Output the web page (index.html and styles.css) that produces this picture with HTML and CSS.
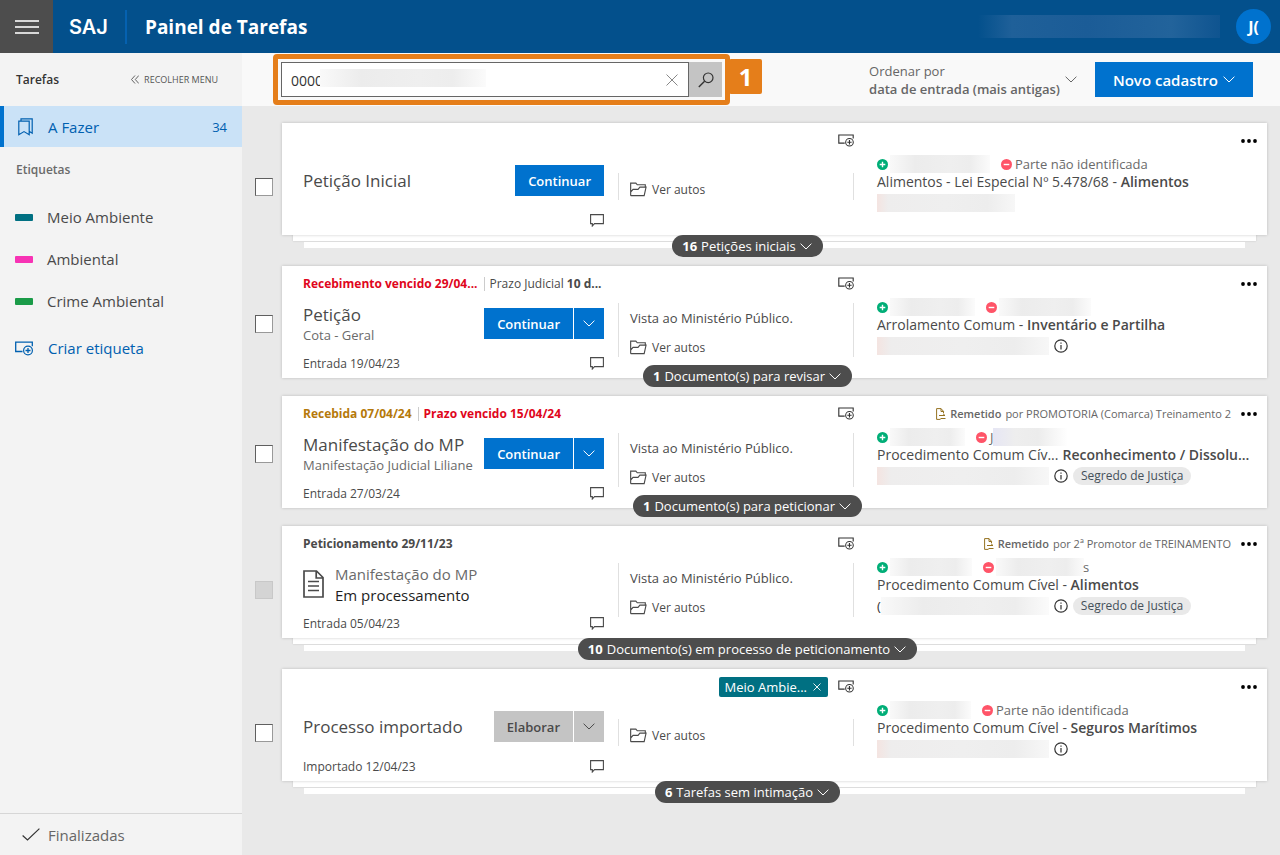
FILE: index.html
```html
<!DOCTYPE html>
<html lang="pt-BR">
<head>
<meta charset="utf-8">
<meta name="viewport" content="width=device-width, initial-scale=1">
<title>Painel de Tarefas</title>
<link rel="stylesheet" href="styles.css">
</head>
<body>
<svg class="sprite" aria-hidden="true">
  <symbol id="i-tag-add" viewBox="0 0 18 15"><path d="M7.500 10.500H.7V1.200h16.600v4" fill="none" stroke="currentColor" stroke-width="1.300"/><circle cx="13" cy="9.500" r="4.400" fill="none" stroke="currentColor" stroke-width="1.200"/><path d="M13 7v5M10.500 9.500h5" stroke="currentColor" stroke-width="1.300"/></symbol>
  <symbol id="i-chevron" viewBox="0 0 12 7"><path d="M.6.700 6 6 11.400.7" fill="none" stroke="currentColor"/></symbol>
  <symbol id="i-folder" viewBox="0 0 18 15"><path d="M.7 14V.7h5.500l1.500 1.800h8.500V5M.7 14h14.300l2-9H10.500L8.500 7.300H3.200L.9 10" fill="none" stroke="currentColor" stroke-width="1.200"/></symbol>
  <symbol id="i-comment" viewBox="0 0 14 13"><path d="M.6.600h12.800v9H4.500L2.300 12V9.600H.6z" fill="none" stroke="currentColor" stroke-width="1.100"/></symbol>
  <symbol id="i-plus" viewBox="0 0 11 11"><circle cx="5.500" cy="5.500" r="5.500" fill="#00ae77"/><path d="M5.500 2.700v5.600M2.700 5.500h5.600" stroke="#fff" stroke-width="1.400"/></symbol>
  <symbol id="i-minus" viewBox="0 0 11 11"><circle cx="5.500" cy="5.500" r="5.500" fill="#ff5468"/><path d="M2.700 5.500h5.600" stroke="#fff" stroke-width="1.400"/></symbol>
  <symbol id="i-dots" viewBox="0 0 16 4"><circle cx="2" cy="2" r="1.900"/><circle cx="8" cy="2" r="1.900"/><circle cx="14" cy="2" r="1.900"/></symbol>
  <symbol id="i-info" viewBox="0 0 14 14"><circle cx="7" cy="7" r="6.200" fill="none" stroke="currentColor" stroke-width="1.200"/><path d="M7 6v4.500M7 3.500v1.300" stroke="currentColor" stroke-width="1.200"/></symbol>
  <symbol id="i-sent" viewBox="0 0 10 12"><path d="M7.500 5V3.300L5 .6H.6v10.800h3.900M5 .6v2.900h2.500M3 7.500h6M7 5.700l2 1.800M4.500 10.500h5" fill="none" stroke="currentColor"/></symbol>
  <symbol id="i-close" viewBox="0 0 12 12"><path d="M.5.5l11 11M11.500.5l-11 11" stroke="currentColor" fill="none"/></symbol>
</svg>

<header class="topbar">
  <button class="burger" aria-label="Menu"><span></span><span></span><span></span></button>
  <span class="logo">SAJ</span>
  <h1 class="page-title">Painel de Tarefas</h1>
  <span class="user-name"></span>
  <button class="avatar">J(</button>
</header>

<div class="layout">
  <aside class="sidebar">
    <div class="side-head">
      <h2 class="side-title">Tarefas</h2>
      <button class="collapse"><svg width="8" height="9" viewBox="0 0 8 9"><path d="M4 .5l-3.500 4 3.500 4M7.800.5l-3.500 4 3.500 4" fill="none" stroke="currentColor" stroke-width=".9"/></svg>RECOLHER MENU</button>
    </div>
    <a class="side-active" href="#">
      <svg width="15" height="18" viewBox="0 0 15 18"><path d="M.8 3.200h10.400v13.500L6 13.600.8 16.700zM3 3V.8h11.200v14.400l-2.700-1.600" fill="none" stroke="currentColor" stroke-width="1.200"/></svg>
      <span class="grow">A Fazer</span><span class="count">34</span>
    </a>
    <h3 class="side-sub">Etiquetas</h3>
    <nav class="tags">
      <a class="tag" href="#"><i class="swatch teal"></i>Meio Ambiente</a>
      <a class="tag" href="#"><i class="swatch pink"></i>Ambiental</a>
      <a class="tag" href="#"><i class="swatch green"></i>Crime Ambiental</a>
    </nav>
    <button class="new-tag"><svg width="18" height="15"><use href="#i-tag-add"/></svg>Criar etiqueta</button>
    <a class="done" href="#"><svg width="18" height="13" viewBox="0 0 18 13"><path d="M.6 7.500l4.900 4.500L17.400.6" fill="none" stroke="currentColor" stroke-width="1.200"/></svg>Finalizadas</a>
  </aside>

  <main class="main">
    <div class="toolbar">
      <form class="search">
        <div class="field">
          <input class="search-input" type="text" value="0000" aria-label="Pesquisar">
          <span class="mask search-mask"></span>
          <button class="clear" type="button" aria-label="Limpar"><svg width="12" height="12"><use href="#i-close"/></svg></button>
        </div>
        <button class="search-btn" type="button" aria-label="Buscar"><svg width="16" height="16" viewBox="0 0 16 16"><circle cx="10.200" cy="5.800" r="4.800" fill="none" stroke="currentColor" stroke-width="1.200"/><path d="M6.600 9.200.8 15" stroke="currentColor" stroke-width="1.400"/></svg></button>
        <span class="highlight"></span>
        <span class="step">1</span>
      </form>
      <button class="sort">
        <span class="sort-text">Ordenar por<b>data de entrada (mais antigas)</b></span>
        <svg width="12" height="7"><use href="#i-chevron"/></svg>
      </button>
      <button class="new-btn">Novo cadastro<svg width="12" height="7"><use href="#i-chevron"/></svg></button>
    </div>

    <div class="list">
      <div class="row">
        <input class="check" type="checkbox" aria-label="Selecionar Petição Inicial">
        <div class="pile">
          <article class="card">
            <section class="task">
              <div class="dates"></div>
              <div class="work">
                <h2 class="title">Petição Inicial</h2>
                <div class="actions"><button class="btn">Continuar</button></div>
              </div>
              <div class="foot"><span></span><button class="icon" aria-label="Comentar"><svg width="14" height="13"><use href="#i-comment"/></svg></button></div>
            </section>
            <section class="view">
              <div class="labels"><button class="icon" aria-label="Etiquetar"><svg width="16" height="13"><use href="#i-tag-add"/></svg></button></div>
              <div class="records"><a class="open" href="#"><svg width="17" height="15"><use href="#i-folder"/></svg>Ver autos</a></div>
            </section>
            <section class="case">
              <div class="origin"><button class="icon" aria-label="Mais"><svg width="16" height="4"><use href="#i-dots"/></svg></button></div>
              <div class="parties"><svg width="11" height="11"><use href="#i-plus"/></svg><span class="mask" style="width:100px"></span><svg class="against" width="11" height="11"><use href="#i-minus"/></svg><span>Parte não identificada</span></div>
              <div class="class">Alimentos - Lei Especial Nº 5.478/68 - <b>Alimentos</b></div>
              <div class="number"><span class="mask warm" style="width:138px"></span></div>
            </section>
          </article>
          <div class="under"></div><div class="under last"></div>
          <div class="more"><button class="pill"><b>16</b> Petições iniciais<svg width="12" height="7"><use href="#i-chevron"/></svg></button></div>
        </div>
      </div>

      <div class="row">
        <input class="check" type="checkbox" aria-label="Selecionar Petição">
        <div class="pile">
          <article class="card">
            <section class="task">
              <div class="dates"><b class="late">Recebimento vencido 29/04...</b><span class="due">Prazo Judicial <b>10 d...</b></span></div>
              <div class="work">
                <div class="names"><h2 class="title">Petição</h2><p class="subtitle">Cota - Geral</p></div>
                <div class="actions"><button class="btn">Continuar</button><button class="btn drop" aria-label="Opções"><svg width="12" height="7"><use href="#i-chevron"/></svg></button></div>
              </div>
              <div class="foot"><span>Entrada 19/04/23</span><button class="icon" aria-label="Comentar"><svg width="14" height="13"><use href="#i-comment"/></svg></button></div>
            </section>
            <section class="view">
              <div class="labels"><button class="icon" aria-label="Etiquetar"><svg width="16" height="13"><use href="#i-tag-add"/></svg></button></div>
              <div class="records"><p class="note">Vista ao Ministério Público.</p><a class="open" href="#"><svg width="17" height="15"><use href="#i-folder"/></svg>Ver autos</a></div>
            </section>
            <section class="case">
              <div class="origin"><button class="icon" aria-label="Mais"><svg width="16" height="4"><use href="#i-dots"/></svg></button></div>
              <div class="parties"><svg width="11" height="11"><use href="#i-plus"/></svg><span class="mask" style="width:85px"></span><svg class="against" width="11" height="11"><use href="#i-minus"/></svg><span class="mask" style="width:92px"></span></div>
              <div class="class">Arrolamento Comum - <b>Inventário e Partilha</b></div>
              <div class="number"><span class="mask warm" style="width:172px"></span><svg width="14" height="14"><use href="#i-info"/></svg></div>
            </section>
          </article>
          <div class="more"><button class="pill"><b>1</b> Documento(s) para revisar<svg width="12" height="7"><use href="#i-chevron"/></svg></button></div>
        </div>
      </div>

      <div class="row">
        <input class="check" type="checkbox" aria-label="Selecionar Manifestação do MP">
        <div class="pile">
          <article class="card">
            <section class="task">
              <div class="dates"><b class="received">Recebida 07/04/24</b><b class="due late">Prazo vencido 15/04/24</b></div>
              <div class="work">
                <div class="names"><h2 class="title">Manifestação do MP</h2><p class="subtitle">Manifestação Judicial Liliane</p></div>
                <div class="actions"><button class="btn">Continuar</button><button class="btn drop" aria-label="Opções"><svg width="12" height="7"><use href="#i-chevron"/></svg></button></div>
              </div>
              <div class="foot"><span>Entrada 27/03/24</span><button class="icon" aria-label="Comentar"><svg width="14" height="13"><use href="#i-comment"/></svg></button></div>
            </section>
            <section class="view">
              <div class="labels"><button class="icon" aria-label="Etiquetar"><svg width="16" height="13"><use href="#i-tag-add"/></svg></button></div>
              <div class="records"><p class="note">Vista ao Ministério Público.</p><a class="open" href="#"><svg width="17" height="15"><use href="#i-folder"/></svg>Ver autos</a></div>
            </section>
            <section class="case">
              <div class="origin"><svg class="sent" width="10" height="12"><use href="#i-sent"/></svg><b>Remetido</b><span class="by">por PROMOTORIA (Comarca) Treinamento 2</span><button class="icon" aria-label="Mais"><svg width="16" height="4"><use href="#i-dots"/></svg></button></div>
              <div class="parties"><svg width="11" height="11"><use href="#i-plus"/></svg><span class="mask" style="width:75px"></span><svg class="against" width="11" height="11"><use href="#i-minus"/></svg><span class="initial">J</span><span class="mask cool" style="width:75px"></span></div>
              <div class="class two"><span>Procedimento Comum Cív...</span><b>Reconhecimento / Dissolu...</b></div>
              <div class="number"><span class="mask warm" style="width:172px"></span><svg width="14" height="14"><use href="#i-info"/></svg><span class="chip">Segredo de Justiça</span></div>
            </section>
          </article>
          <div class="more"><button class="pill"><b>1</b> Documento(s) para peticionar<svg width="12" height="7"><use href="#i-chevron"/></svg></button></div>
        </div>
      </div>

      <div class="row">
        <input class="check" type="checkbox" disabled aria-label="Selecionar Manifestação do MP">
        <div class="pile">
          <article class="card">
            <section class="task">
              <div class="dates"><b>Peticionamento 29/11/23</b></div>
              <div class="work">
                <svg class="doc" width="21" height="28" viewBox="0 0 21 28"><path d="M1 1h12.500L20 7.500V27H1zM13.200 1v7H20M5 11.500h11M5 16h11M5 20.500h11" fill="none" stroke="currentColor" stroke-width="1.700"/></svg>
                <div class="names grow"><h2 class="title pending">Manifestação do MP</h2><p class="status">Em processamento</p></div>
              </div>
              <div class="foot"><span>Entrada 05/04/23</span><button class="icon" aria-label="Comentar"><svg width="14" height="13"><use href="#i-comment"/></svg></button></div>
            </section>
            <section class="view">
              <div class="labels"><button class="icon" aria-label="Etiquetar"><svg width="16" height="13"><use href="#i-tag-add"/></svg></button></div>
              <div class="records"><p class="note">Vista ao Ministério Público.</p><a class="open" href="#"><svg width="17" height="15"><use href="#i-folder"/></svg>Ver autos</a></div>
            </section>
            <section class="case">
              <div class="origin"><svg class="sent" width="10" height="12"><use href="#i-sent"/></svg><b>Remetido</b><span class="by">por 2ª Promotor de TREINAMENTO</span><button class="icon" aria-label="Mais"><svg width="16" height="4"><use href="#i-dots"/></svg></button></div>
              <div class="parties"><svg width="11" height="11"><use href="#i-plus"/></svg><span class="mask" style="width:82px"></span><svg class="against" width="11" height="11"><use href="#i-minus"/></svg><span class="mask" style="width:88px"></span><span class="tail">s</span></div>
              <div class="class">Procedimento Comum Cível - <b>Alimentos</b></div>
              <div class="number"><span class="initial">(</span><span class="mask" style="width:168px"></span><svg width="14" height="14"><use href="#i-info"/></svg><span class="chip">Segredo de Justiça</span></div>
            </section>
          </article>
          <div class="under"></div><div class="under last"></div>
          <div class="more"><button class="pill"><b>10</b> Documento(s) em processo de peticionamento<svg width="12" height="7"><use href="#i-chevron"/></svg></button></div>
        </div>
      </div>

      <div class="row">
        <input class="check" type="checkbox" aria-label="Selecionar Processo importado">
        <div class="pile">
          <article class="card">
            <section class="task">
              <div class="dates"></div>
              <div class="work">
                <h2 class="title">Processo importado</h2>
                <div class="actions"><button class="btn gray">Elaborar</button><button class="btn gray drop" aria-label="Opções"><svg width="12" height="7"><use href="#i-chevron"/></svg></button></div>
              </div>
              <div class="foot"><span>Importado 12/04/23</span><button class="icon" aria-label="Comentar"><svg width="14" height="13"><use href="#i-comment"/></svg></button></div>
            </section>
            <section class="view">
              <div class="labels"><button class="label">Meio Ambie...<svg width="8" height="8" viewBox="0 0 8 8"><path d="M.5.5l7 7M7.500.5l-7 7" stroke="currentColor" stroke-width=".9"/></svg></button><button class="icon" aria-label="Etiquetar"><svg width="16" height="13"><use href="#i-tag-add"/></svg></button></div>
              <div class="records"><a class="open" href="#"><svg width="17" height="15"><use href="#i-folder"/></svg>Ver autos</a></div>
            </section>
            <section class="case">
              <div class="origin"><button class="icon" aria-label="Mais"><svg width="16" height="4"><use href="#i-dots"/></svg></button></div>
              <div class="parties"><svg width="11" height="11"><use href="#i-plus"/></svg><span class="mask" style="width:81px"></span><svg class="against" width="11" height="11"><use href="#i-minus"/></svg><span>Parte não identificada</span></div>
              <div class="class">Procedimento Comum Cível - <b>Seguros Marítimos</b></div>
              <div class="number"><span class="mask warm" style="width:172px"></span><svg width="14" height="14"><use href="#i-info"/></svg></div>
            </section>
          </article>
          <div class="under"></div><div class="under last"></div>
          <div class="more"><button class="pill"><b>6</b> Tarefas sem intimação<svg width="12" height="7"><use href="#i-chevron"/></svg></button></div>
        </div>
      </div>
    </div>
  </main>
</div>
</body>
</html>
```
FILE: styles.css
```css
* { box-sizing: border-box; margin: 0; }
body { display: flex; flex-direction: column; min-height: 100vh; font: 13px/18px "Open Sans", "Noto Sans", sans-serif; color: #4a4a4a; background: #e9e9e9; }
button { font: inherit; color: inherit; background: none; border: 0; padding: 0; cursor: pointer; display: flex; align-items: center; }
a { color: inherit; text-decoration: none; display: flex; align-items: center; }
svg { flex: none; display: block; }
b { font-weight: 600; }
.sprite { position: absolute; width: 0; height: 0; }
.grow { flex: 1; }

.topbar { display: flex; align-items: center; height: 53px; background: #03508c; color: #fff; padding-right: 9px; }
.burger { width: 53px; height: 53px; background: #4d4d4d; flex-direction: column; justify-content: center; gap: 4px; }
.burger span { width: 24px; height: 2px; background: #d8d8d8; }
.logo { font: 600 20px/34px Inter, sans-serif; padding: 0 17px 0 16px; border-right: 2px solid #0561b0; }
.page-title { font-size: 19px; line-height: 26px; font-weight: 700; padding-left: 18px; flex: 1; }
.user-name { width: 242px; height: 23px; margin-right: 16px; background: linear-gradient(90deg, #03508c, #1f6099 14%, #1b5c97 45%, #22639b 80%, #0f5490); }
.avatar { width: 35px; height: 35px; border-radius: 50%; background: #0072ce; font-size: 16px; font-weight: 700; justify-content: center; }

.layout { display: flex; flex: 1; }
.sidebar { width: 242px; flex: none; background: #f3f3f3; display: flex; flex-direction: column; }
.side-head { height: 53px; display: flex; align-items: center; justify-content: space-between; padding: 0 24px 0 16px; }
.side-title { font-size: 12px; font-weight: 600; color: #333; }
.collapse { font-size: 9px; gap: 5px; color: #555; }
.side-active { height: 41px; background: #cae2f7; border-left: 4px solid #0072ce; color: #0060b0; font-size: 15px; padding: 0 15px 0 14px; gap: 15px; }
.count { font-size: 13px; }
.side-sub { font-size: 12px; font-weight: 600; color: #6a6a6a; padding: 14px 16px 17px; }
.tags { display: flex; flex-direction: column; }
.tag { height: 42px; padding-left: 15px; gap: 14px; font-size: 15px; }
.swatch { width: 18px; height: 7px; border-radius: 1px; }
.teal { background: #007082; }
.pink { background: #f733b4; }
.green { background: #1a9b48; }
.new-tag { height: 52px; padding-left: 15px; gap: 15px; font-size: 15px; color: #0060b0; }
.done { margin-top: auto; height: 42px; border-top: 1px solid #d6d6d6; padding-left: 22px; gap: 8px; font-size: 15px; color: #666; }
.done svg { color: #333; }

.main { flex: 1; min-width: 0; }
.toolbar { height: 53px; background: #f9f9f9; display: flex; align-items: center; padding: 0 27px 0 39px; }
.search { position: relative; display: flex; flex: 0 1 441px; height: 35px; margin-right: auto; }
.field { position: relative; flex: 1; display: flex; align-items: center; background: #fff; border: 1px solid #666; }
.search-input { flex: 1; min-width: 0; height: 33px; border: 0; background: none; padding: 2px 9px 0; font: 14px "Open Sans", sans-serif; color: #333; }
.search-mask { position: absolute; left: 38px; top: 6px; width: 166px; height: 23px; }
.clear { color: #888; margin-right: 10px; }
.search-btn { width: 33px; background: #c4c4c4; color: #333; justify-content: center; }
.highlight { position: absolute; inset: -8px; border: 5px solid #e57e1a; border-radius: 4px; pointer-events: none; }
.step { position: absolute; left: calc(100% + 7px); top: -3px; width: 33px; height: 35px; border-radius: 2px; background: #e57e1a; color: #fff; font-size: 24px; line-height: 35px; font-weight: 700; text-align: center; }
.sort { text-align: left; color: #666; font-size: 13px; gap: 5px; margin-right: 18px; }
.sort-text { white-space: nowrap; }
.sort b { display: block; font-size: 13px; }
.new-btn { height: 35px; padding: 0 18px; gap: 5px; background: #0072ce; color: #fff; font-size: 15px; font-weight: 600; white-space: nowrap; }

.mask { flex: none; height: 18px; background: linear-gradient(90deg, #f9f9f9, #ececec 25%, #efefef 60%, #ededed 80%, #fbfbfb); }
.mask.warm { background: linear-gradient(90deg, #f4e4e1, #eeeded 8%, #efefef 50%, #ededed 80%, #f7f7f7); }
.mask.cool { background: linear-gradient(90deg, #e6e6f4, #eee 30%, #ececec 60%, #fff); }

.list { display: flex; flex-direction: column; gap: 18px; padding: 17px 13px 17px; }
.row { display: flex; align-items: center; gap: 9px; }
.check { appearance: none; flex: none; width: 18px; height: 18px; margin-top: 3px; border: 1px solid #999; border-top-color: #5f5f5f; border-left-color: #5f5f5f; background: #fff; }
.check:disabled { background: #d4d4d4; border-color: #c8c8c8; }
.pile { position: relative; flex: 1; min-width: 0; }
.card { min-height: 112px; display: grid; grid-template-columns: 336px 236px 1fr; background: #fff; box-shadow: 0 0 3px rgba(0, 0, 0, .2); position: relative; }
.under { height: 6px; margin: 0 11px 1px; background: #fff; box-shadow: 0 0 2px rgba(0, 0, 0, .2); }
.under.last { margin: 0 22px; box-shadow: none; }

.task { padding: 0 14px 0 21px; display: flex; flex-direction: column; min-width: 0; }
.dates { height: 36px; display: flex; align-items: center; font-size: 12px; white-space: nowrap; }
.dates b { font-weight: 700; }
.due { border-left: 1px solid #ccc; padding-left: 5px; margin-left: 6px; line-height: 14px; }
.late { color: #e0061c; }
.received { color: #b5790a; }
.work { height: 43px; display: flex; align-items: center; justify-content: space-between; white-space: nowrap; }
.title { font-size: 17px; line-height: 22px; font-weight: 500; }
.subtitle { font-size: 13px; color: #6a6a6a; }
.pending { font-size: 15px; font-weight: 400; color: #6a6a6a; }
.status { font-size: 15px; line-height: 20px; font-weight: 500; color: #1e1e1e; }
.doc { margin-right: 11px; }
.actions { display: flex; gap: 1px; }
.btn { height: 31px; padding: 0 13px; background: #0072ce; color: #fff; font-size: 13px; font-weight: 600; justify-content: center; }
.btn.gray { background: #c4c4c4; color: #4a4a4a; }
.btn.drop { width: 30px; padding: 0; }
.foot { flex: 1; display: flex; align-items: center; justify-content: space-between; font-size: 12px; padding-top: 4px; }

.view { display: flex; flex-direction: column; min-width: 0; }
.labels { height: 35px; display: flex; align-items: center; justify-content: flex-end; gap: 10px; color: #333; }
.label { height: 20px; padding: 0 7px 0 5px; gap: 6px; border-radius: 2px; background: #007082; color: #fff; font-size: 13px; }
.records { min-height: 27px; margin: auto 0; padding: 6px 0 0 11px; border: solid #e0e0e0; border-width: 0 1px; display: flex; flex-direction: column; gap: 12px; justify-content: center; }
.view::after { content: ""; height: 20px; }
.open { gap: 5px; font-size: 12px; }

.case { padding: 0 10px 0 23px; min-width: 0; white-space: nowrap; }
.origin { height: 32px; display: flex; align-items: center; justify-content: flex-end; font-size: 11px; color: #666; padding-top: 4px; }
.origin b { font-weight: 600; margin: 0 4px; }
.origin .icon { margin-left: 10px; color: #222; }
.sent { color: #957221; }
.parties { height: 18px; display: flex; align-items: center; gap: 3px; color: #6a6a6a; }
.against { margin-left: 8px; }
.class { font-size: 14px; height: 18px; }
.two { display: flex; gap: 4px; }
.number { height: 21px; padding-top: 2px; display: flex; align-items: center; gap: 5px; color: #333; }
.parties .mask { margin-left: -1px; }
.initial { margin-right: -3px; }
.number .initial { margin-right: -5px; }
.tail { margin-left: -4px; }
.chip { height: 18px; padding: 0 8px; border-radius: 9px; background: #e9e9e9; font-size: 12px; font-weight: 500; color: #45505a; }
.more { position: absolute; left: 0; right: 54px; bottom: -9px; display: flex; justify-content: center; }
.pill { height: 22px; padding: 0 11px 0 10px; gap: 4px; border-radius: 11px; background: #4d4d4d; color: #fff; font-size: 13px; white-space: nowrap; }
.pill b { font-weight: 700; }
```
